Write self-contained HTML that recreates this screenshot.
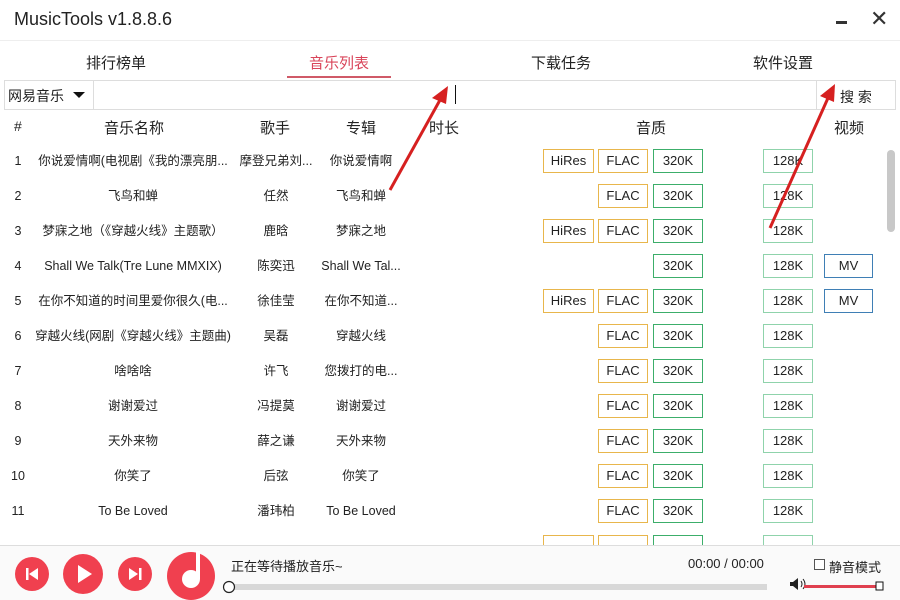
<!DOCTYPE html>
<html><head><meta charset="utf-8"><style>
*{margin:0;padding:0;box-sizing:border-box}
body{width:900px;height:600px;overflow:hidden;background:#fff;font-family:"Liberation Sans","Noto Sans CJK SC",sans-serif;color:#222;position:relative}
.a{position:absolute;white-space:nowrap}
.t{position:absolute;height:24px;line-height:22px;font-size:13px;text-align:center;border:1px solid;background:#fff}
.h{border-color:#e8b64c;width:51px;left:543px}
.f{border-color:#e8b64c;width:50px;left:598px}
.k{border-color:#3cae6a;width:50px;left:653px}
.e{border-color:#8fd3ab;width:50px;left:763px}
.m{border-color:#3f7fb5;width:49px;left:824px}
.c{position:absolute;font-size:12.5px;text-align:center;transform:translateY(-50%);white-space:nowrap;line-height:18px}
.n{left:6px;width:24px;text-align:center}
.s{left:30px;width:206px}
.g{left:236px;width:80px}
.b{left:316px;width:90px}
</style></head><body>
<div class="a" style="left:14px;top:9px;font-size:18px;color:#222">MusicTools v1.8.8.6</div>
<div class="a" style="left:836px;top:21px;width:11px;height:3px;background:#333"></div>
<div class="a" style="left:870px;top:6px;font-size:22px;color:#333">✕</div>
<div class="a" style="left:0;top:40px;width:900px;height:1px;background:#eee"></div>
<div class="a" style="left:86px;top:52px;font-size:15px">排行榜单</div>
<div class="a" style="left:309px;top:52px;font-size:15px;color:#d9455a">音乐列表</div>
<div class="a" style="left:287px;top:76px;width:104px;height:2px;background:#d05a68"></div>
<div class="a" style="left:531px;top:52px;font-size:15px">下载任务</div>
<div class="a" style="left:753px;top:52px;font-size:15px">软件设置</div>
<div class="a" style="left:4px;top:80px;width:892px;height:30px;border:1px solid #ddd;background:#fff"></div>
<div class="a" style="left:93px;top:81px;width:1px;height:28px;background:#ddd"></div>
<div class="a" style="left:816px;top:81px;width:1px;height:28px;background:#ddd"></div>
<div class="a" style="left:8px;top:86px;font-size:14px">网易音乐</div>
<div class="a" style="left:73px;top:92px;width:0;height:0;border-left:6px solid transparent;border-right:6px solid transparent;border-top:6px solid #111"></div>
<div class="a" style="left:455px;top:85px;width:1px;height:19px;background:#111"></div>
<div class="a" style="left:840px;top:87px;font-size:14px">搜 索</div>
<div class="a" style="left:14px;top:118px;font-size:14px">#</div>
<div class="a" style="left:104px;top:117px;font-size:15px">音乐名称</div>
<div class="a" style="left:260px;top:117px;font-size:15px">歌手</div>
<div class="a" style="left:346px;top:117px;font-size:15px">专辑</div>
<div class="a" style="left:429px;top:117px;font-size:15px">时长</div>
<div class="a" style="left:636px;top:117px;font-size:15px">音质</div>
<div class="a" style="left:834px;top:117px;font-size:15px">视频</div>
<div class="a" style="left:887px;top:150px;width:8px;height:82px;background:#c8c8c8;border-radius:4px"></div>

<div class="c n" style="top:161px">1</div><div class="c s" style="top:161px">你说爱情啊(电视剧《我的漂亮朋...</div><div class="c g" style="top:161px">摩登兄弟刘...</div><div class="c b" style="top:161px">你说爱情啊</div>
<div class="t h" style="top:149px">HiRes</div><div class="t f" style="top:149px">FLAC</div><div class="t k" style="top:149px">320K</div><div class="t e" style="top:149px">128K</div>

<div class="c n" style="top:196px">2</div><div class="c s" style="top:196px">飞鸟和蝉</div><div class="c g" style="top:196px">任然</div><div class="c b" style="top:196px">飞鸟和蝉</div>
<div class="t f" style="top:184px">FLAC</div><div class="t k" style="top:184px">320K</div><div class="t e" style="top:184px">128K</div>

<div class="c n" style="top:231px">3</div><div class="c s" style="top:231px">梦寐之地（《穿越火线》主题歌）</div><div class="c g" style="top:231px">鹿晗</div><div class="c b" style="top:231px">梦寐之地</div>
<div class="t h" style="top:219px">HiRes</div><div class="t f" style="top:219px">FLAC</div><div class="t k" style="top:219px">320K</div><div class="t e" style="top:219px">128K</div>

<div class="c n" style="top:266px">4</div><div class="c s" style="top:266px">Shall We Talk(Tre Lune MMXIX)</div><div class="c g" style="top:266px">陈奕迅</div><div class="c b" style="top:266px">Shall We Tal...</div>
<div class="t k" style="top:254px">320K</div><div class="t e" style="top:254px">128K</div><div class="t m" style="top:254px">MV</div>

<div class="c n" style="top:301px">5</div><div class="c s" style="top:301px">在你不知道的时间里爱你很久(电...</div><div class="c g" style="top:301px">徐佳莹</div><div class="c b" style="top:301px">在你不知道...</div>
<div class="t h" style="top:289px">HiRes</div><div class="t f" style="top:289px">FLAC</div><div class="t k" style="top:289px">320K</div><div class="t e" style="top:289px">128K</div><div class="t m" style="top:289px">MV</div>

<div class="c n" style="top:336px">6</div><div class="c s" style="top:336px">穿越火线(网剧《穿越火线》主题曲)</div><div class="c g" style="top:336px">吴磊</div><div class="c b" style="top:336px">穿越火线</div>
<div class="t f" style="top:324px">FLAC</div><div class="t k" style="top:324px">320K</div><div class="t e" style="top:324px">128K</div>

<div class="c n" style="top:371px">7</div><div class="c s" style="top:371px">啥啥啥</div><div class="c g" style="top:371px">许飞</div><div class="c b" style="top:371px">您拨打的电...</div>
<div class="t f" style="top:359px">FLAC</div><div class="t k" style="top:359px">320K</div><div class="t e" style="top:359px">128K</div>

<div class="c n" style="top:406px">8</div><div class="c s" style="top:406px">谢谢爱过</div><div class="c g" style="top:406px">冯提莫</div><div class="c b" style="top:406px">谢谢爱过</div>
<div class="t f" style="top:394px">FLAC</div><div class="t k" style="top:394px">320K</div><div class="t e" style="top:394px">128K</div>

<div class="c n" style="top:441px">9</div><div class="c s" style="top:441px">天外来物</div><div class="c g" style="top:441px">薛之谦</div><div class="c b" style="top:441px">天外来物</div>
<div class="t f" style="top:429px">FLAC</div><div class="t k" style="top:429px">320K</div><div class="t e" style="top:429px">128K</div>

<div class="c n" style="top:476px">10</div><div class="c s" style="top:476px">你笑了</div><div class="c g" style="top:476px">后弦</div><div class="c b" style="top:476px">你笑了</div>
<div class="t f" style="top:464px">FLAC</div><div class="t k" style="top:464px">320K</div><div class="t e" style="top:464px">128K</div>

<div class="c n" style="top:511px">11</div><div class="c s" style="top:511px">To Be Loved</div><div class="c g" style="top:511px">潘玮柏</div><div class="c b" style="top:511px">To Be Loved</div>
<div class="t f" style="top:499px">FLAC</div><div class="t k" style="top:499px">320K</div><div class="t e" style="top:499px">128K</div>

<div class="t h" style="top:535px"></div><div class="t f" style="top:535px"></div><div class="t k" style="top:535px"></div><div class="t e" style="top:535px"></div>

<div class="a" style="left:0;top:545px;width:900px;height:55px;background:#fafafa;border-top:1px solid #ddd"></div>
<svg class="a" style="left:0;top:545px" width="900" height="55">
<circle cx="32" cy="29" r="17" fill="#f0404f"/>
<rect x="26" y="23" width="2.5" height="12" fill="#fff"/><path d="M38 23 L29 29 L38 35Z" fill="#fff"/>
<circle cx="83" cy="29" r="20" fill="#f0404f"/><path d="M78 20 L92 29 L78 38Z" fill="#fff"/>
<circle cx="135" cy="29" r="17" fill="#f0404f"/>
<rect x="139" y="23" width="2.5" height="12" fill="#fff"/><path d="M129 23 L138 29 L129 35Z" fill="#fff"/>
<circle cx="191" cy="31" r="24" fill="#f0404f"/>
<circle cx="191" cy="34" r="9" fill="#fff"/><rect x="196" y="6" width="4" height="28" fill="#fff"/>
<rect x="229" y="39" width="538" height="6" fill="#d8d8d8"/>
<circle cx="229" cy="42" r="5.5" fill="#fff" stroke="#222" stroke-width="1.2"/>
<path d="M790 37 h3 l5 -4 v12 l-5 -4 h-3z" fill="#222"/>
<path d="M801 36 q2 3 0 6 M803 34 q4 5 0 10" stroke="#222" fill="none" stroke-width="1"/>
<rect x="804" y="40" width="74" height="3" fill="#e0404f"/>
<rect x="876" y="37" width="7" height="8" fill="#fff" stroke="#111"/>
</svg>
<div class="a" style="left:231px;top:556px;font-size:13px">正在等待播放音乐~</div>
<div class="a" style="left:688px;top:556px;font-size:13px">00:00 / 00:00</div>
<div class="a" style="left:814px;top:559px;width:11px;height:11px;border:1px solid #555;background:#fff"></div>
<div class="a" style="left:829px;top:557px;font-size:13px">静音模式</div>
<svg class="a" style="left:0;top:0" width="900" height="600">
<path d="M390 190 L440 100" stroke="#d62020" stroke-width="3"/>
<path d="M448 86 L432 98 L446 104Z" fill="#d62020"/>
<path d="M770 228 L828 98" stroke="#d62020" stroke-width="3"/>
<path d="M835 84 L820 96 L834 102Z" fill="#d62020"/>
</svg>
</body></html>
